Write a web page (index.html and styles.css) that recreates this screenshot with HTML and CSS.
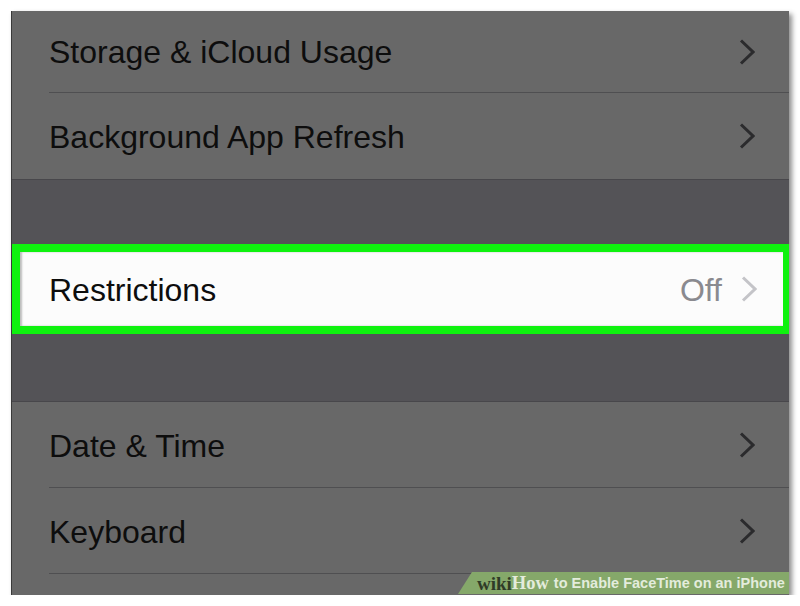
FILE: index.html
```html
<!DOCTYPE html>
<html>
<head>
<meta charset="utf-8">
<link rel="stylesheet" href="styles.css">
</head>
<body>
<div class="frame">
  <div class="group">
    <div class="row first sep"><span class="label">Storage &amp; iCloud Usage</span><span class="chev"><svg width="16" height="26" viewBox="0 0 16 26"><path d="M2 1.5 L14 13 L2 24.5" fill="none" stroke="#2b2b2d" stroke-width="3"/></svg></span></div>
    <div class="row"><span class="label">Background App Refresh</span><span class="chev"><svg width="16" height="26" viewBox="0 0 16 26"><path d="M2 1.5 L14 13 L2 24.5" fill="none" stroke="#2b2b2d" stroke-width="3"/></svg></span></div>
  </div>
  <div class="spacer top"></div>
  <div class="highlight">
    <div class="row white"><span class="label">Restrictions</span><span class="value">Off</span><span class="chev"><svg width="16" height="26" viewBox="0 0 16 26"><path d="M2 1.5 L14 13 L2 24.5" fill="none" stroke="#c4c4c8" stroke-width="3"/></svg></span></div>
  </div>
  <div class="spacer bottom"></div>
  <div class="group">
    <div class="row sep"><span class="label">Date &amp; Time</span><span class="chev"><svg width="16" height="26" viewBox="0 0 16 26"><path d="M2 1.5 L14 13 L2 24.5" fill="none" stroke="#2b2b2d" stroke-width="3"/></svg></span></div>
    <div class="row sep"><span class="label">Keyboard</span><span class="chev"><svg width="16" height="26" viewBox="0 0 16 26"><path d="M2 1.5 L14 13 L2 24.5" fill="none" stroke="#2b2b2d" stroke-width="3"/></svg></span></div>
    <div class="rest"></div>
  </div>
  <div class="watermark"><span class="wiki">wiki</span><span class="how">How</span><span class="title">to Enable FaceTime on an iPhone</span></div>
</div>
</body>
</html>
```
FILE: styles.css
```css
html, body {
  margin: 0;
  padding: 0;
  background: #ffffff;
}
body {
  padding: 11px 0 0 11px;
  font-family: "Liberation Sans", Arial, sans-serif;
}
.frame {
  position: relative;
  width: 778px;
  height: 584px;
  background: #686868;
  box-shadow: 3px 3px 5px rgba(0,0,0,0.45);
  border-left: 1px solid #3a3a3a;
  box-sizing: border-box;
  overflow: hidden;
  display: flex;
  flex-direction: column;
}
.group {
  background: #686868;
}
.row {
  display: flex;
  align-items: center;
  height: 86px;
  box-sizing: border-box;
  padding: 3px 34px 0 37px;
  color: #0d0d0d;
  font-size: 32px;
  position: relative;
}
.row.first { height: 82px; padding-top: 0; }
.row.first .chev { margin-top: 0; }
.row.sep::after {
  content: "";
  position: absolute;
  left: 37px;
  right: 0;
  bottom: 0;
  height: 1px;
  background: #4f4f51;
}
.label { flex: 1; }
.chev { display: flex; align-items: center; margin-top: -3px; }
.spacer {
  background: #545357;
}
.spacer.top {
  height: 64px;
  border-top: 1px solid #48474b;
}
.spacer.bottom {
  height: 67px;
  border-bottom: 1px solid #48474b;
}
.highlight {
  border: 8px solid #0ff20f;
  margin-right: -2px;
}
.row.white {
  background: #fcfcfc;
  height: 74px;
  padding-left: 29px;
  padding-right: 26px;
  box-shadow: inset 2px 0 2px rgba(0,0,0,0.25);
}
.value {
  color: #8a8a8f;
  margin-right: 19px;
}
.rest { height: 21px; }
.watermark {
  position: absolute;
  right: 0;
  bottom: 1px;
  width: 331px;
  height: 22px;
  background: #85a86a;
  clip-path: polygon(14px 0, 100% 0, 100% 100%, 0 100%);
  display: flex;
  align-items: center;
  padding-left: 19px;
  box-sizing: border-box;
  font-size: 14.5px;
  white-space: nowrap;
}
.wiki {
  font-family: "Liberation Serif", serif;
  font-weight: bold;
  color: #2f3b27;
  font-size: 19px;
  line-height: 1;
}
.how {
  font-family: "Liberation Serif", serif;
  font-weight: bold;
  color: #e3ecdc;
  font-size: 18.5px;
  line-height: 1;
}
.title {
  color: #e3ecdc;
  font-weight: bold;
  margin-left: 5px;
}
```
